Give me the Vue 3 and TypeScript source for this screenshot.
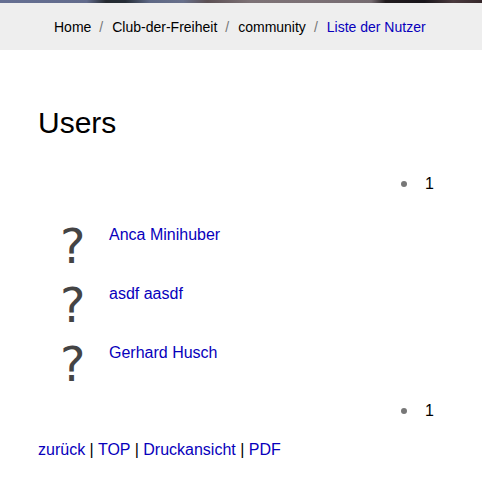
<script setup lang="ts">
interface Crumb {
  label: string
  current?: boolean
}

const crumbs: Crumb[] = [
  { label: 'Home' },
  { label: 'Club-der-Freiheit' },
  { label: 'community' },
  { label: 'Liste der Nutzer', current: true },
]

const users: string[] = ['Anca Minihuber', 'asdf aasdf', 'Gerhard Husch']
const actions: string[] = ['zurück', 'TOP', 'Druckansicht', 'PDF']
</script>

<template>
  <div class="page">
    <div class="banner"></div>
    <nav class="breadcrumb">
      <ol>
        <li v-for="crumb in crumbs" :key="crumb.label">
          <a href="#" :class="{ current: crumb.current }">{{ crumb.label }}</a>
        </li>
      </ol>
    </nav>
    <main class="content">
      <h1>Users</h1>
      <ul class="pager">
        <li>1</li>
      </ul>
      <ul class="users">
        <li v-for="user in users" :key="user">
          <span class="avatar" aria-hidden="true">?</span>
          <a href="#">{{ user }}</a>
        </li>
      </ul>
      <ul class="pager">
        <li>1</li>
      </ul>
      <p class="actions">
        <template v-for="(action, i) in actions" :key="action"><template v-if="i > 0"> | </template><a href="#">{{ action }}</a></template>
      </p>
    </main>
  </div>
</template>

<style>
body {
  background: #fff;
}
</style>

<style scoped>
.page {
  font: 16px/24px "Liberation Sans", Arial, sans-serif;
  color: #000;
}

ul,
ol {
  margin: 0;
  padding: 0;
  list-style: none;
}

a {
  color: #0800bc;
  text-decoration: none;
}

.banner {
  height: 3px;
  background: linear-gradient(90deg, #656f92 0%, #626b8c 18%, #252a30 22%, #252d36 26%, #5e6885 31%, #68708b 38%, #5c5054 43%, #7d7276 52%, #7b7075 65%, #756b70 77%, #211b1e 80%, #18151a 88%, #4a3a3e 94%, #35272b 100%);
}

.breadcrumb {
  padding: 12px 54px 11px;
  background: #eee;
  font-size: 14px;
}

.breadcrumb ol {
  display: flex;
}

.breadcrumb li + li::before {
  content: "/";
  padding: 0 9px 0 8px;
  color: #777;
}

.breadcrumb a {
  color: #000;
}

.breadcrumb a.current {
  color: #0800bc;
}

.content {
  padding: 53px 38px 20px;
}

h1 {
  margin: 0 0 29px;
  font-size: 30px;
  font-weight: 400;
  line-height: 40px;
}

.pager {
  display: flex;
  justify-content: flex-end;
  padding-right: 10px;
}

.pager li {
  display: flex;
  align-items: center;
  gap: 18px;
}

.pager li::before {
  content: "";
  width: 6px;
  height: 6px;
  border-radius: 50%;
  background: #777;
}

.users {
  display: flex;
  flex-direction: column;
  gap: 11px;
  padding: 27px 22px 10px;
}

.users li {
  display: flex;
  align-items: flex-start;
}

.avatar {
  width: 49px;
  font: 48px/46px "DejaVu Sans", sans-serif;
  height: 48px;
  color: #444;
}

.actions {
  margin: 15px 0 0;
}
</style>
